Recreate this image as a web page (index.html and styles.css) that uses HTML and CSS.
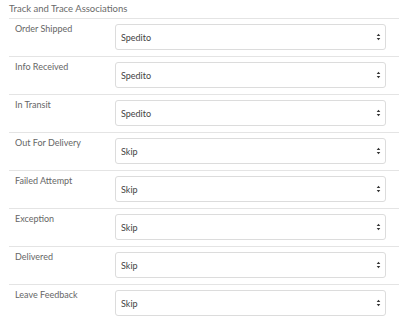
FILE: index.html
```html
<!DOCTYPE html>
<html lang="en">
<head>
    <meta charset="UTF-8">
    <title>Track and Trace Associations</title>
    <link rel="stylesheet" href="styles.css">
</head>
<body>
<div class="panel">
    <div class="panel-title">Track and Trace Associations</div>
    <div class="row">
        <label class="row-label">Order Shipped</label>
        <div class="pick">
            <select><option>Spedito</option><option>Skip</option></select>
            <svg class="pick-arrows" width="5" height="8" viewBox="0 0 5 8"><path d="M2.5 0.8 L4.3 3.1 L0.7 3.1 Z M2.5 7.2 L4.3 4.9 L0.7 4.9 Z"/></svg>
        </div>
    </div>
    <div class="row">
        <label class="row-label">Info Received</label>
        <div class="pick">
            <select><option>Spedito</option><option>Skip</option></select>
            <svg class="pick-arrows" width="5" height="8" viewBox="0 0 5 8"><path d="M2.5 0.8 L4.3 3.1 L0.7 3.1 Z M2.5 7.2 L4.3 4.9 L0.7 4.9 Z"/></svg>
        </div>
    </div>
    <div class="row">
        <label class="row-label">In Transit</label>
        <div class="pick">
            <select><option>Spedito</option><option>Skip</option></select>
            <svg class="pick-arrows" width="5" height="8" viewBox="0 0 5 8"><path d="M2.5 0.8 L4.3 3.1 L0.7 3.1 Z M2.5 7.2 L4.3 4.9 L0.7 4.9 Z"/></svg>
        </div>
    </div>
    <div class="row">
        <label class="row-label">Out For Delivery</label>
        <div class="pick">
            <select><option>Skip</option><option>Spedito</option></select>
            <svg class="pick-arrows" width="5" height="8" viewBox="0 0 5 8"><path d="M2.5 0.8 L4.3 3.1 L0.7 3.1 Z M2.5 7.2 L4.3 4.9 L0.7 4.9 Z"/></svg>
        </div>
    </div>
    <div class="row">
        <label class="row-label">Failed Attempt</label>
        <div class="pick">
            <select><option>Skip</option><option>Spedito</option></select>
            <svg class="pick-arrows" width="5" height="8" viewBox="0 0 5 8"><path d="M2.5 0.8 L4.3 3.1 L0.7 3.1 Z M2.5 7.2 L4.3 4.9 L0.7 4.9 Z"/></svg>
        </div>
    </div>
    <div class="row">
        <label class="row-label">Exception</label>
        <div class="pick">
            <select><option>Skip</option><option>Spedito</option></select>
            <svg class="pick-arrows" width="5" height="8" viewBox="0 0 5 8"><path d="M2.5 0.8 L4.3 3.1 L0.7 3.1 Z M2.5 7.2 L4.3 4.9 L0.7 4.9 Z"/></svg>
        </div>
    </div>
    <div class="row">
        <label class="row-label">Delivered</label>
        <div class="pick">
            <select><option>Skip</option><option>Spedito</option></select>
            <svg class="pick-arrows" width="5" height="8" viewBox="0 0 5 8"><path d="M2.5 0.8 L4.3 3.1 L0.7 3.1 Z M2.5 7.2 L4.3 4.9 L0.7 4.9 Z"/></svg>
        </div>
    </div>
    <div class="row">
        <label class="row-label">Leave Feedback</label>
        <div class="pick">
            <select><option>Skip</option><option>Spedito</option></select>
            <svg class="pick-arrows" width="5" height="8" viewBox="0 0 5 8"><path d="M2.5 0.8 L4.3 3.1 L0.7 3.1 Z M2.5 7.2 L4.3 4.9 L0.7 4.9 Z"/></svg>
        </div>
    </div>
</div>
</body>
</html>
```

FILE: styles.css
```css
* {
    padding: 0;
    margin: 0;
    box-sizing: border-box;
}

body {
    background: #fff;
    font-family: Lato, "Open Sans", sans-serif;
    color: #666;
}

.panel {
    width: 390px;
    margin-left: 9px;
}

.panel-title {
    height: 18px;
    line-height: 18px;
    font-size: 9.5px;
    color: #6a6a6a;
}

.row {
    display: grid;
    grid-template-columns: 106px 271px;
    border-top: 1px solid #e4e4e4;
    padding: 5px 0 6px;
}

.row-label {
    font-size: 9px;
    line-height: 10px;
    padding-left: 6px;
    color: #666;
}

.pick {
    position: relative;
    height: 26px;
}

.pick select {
    -webkit-appearance: none;
    appearance: none;
    width: 100%;
    height: 26px;
    border: 1px solid #dcdcdc;
    border-radius: 3px;
    background: #fff;
    padding: 0 5px;
    font-family: inherit;
    font-size: 9px;
    color: #444;
    outline: none;
}

.pick-arrows {
    position: absolute;
    right: 5px;
    top: 9px;
    fill: #333;
    pointer-events: none;
}
```
